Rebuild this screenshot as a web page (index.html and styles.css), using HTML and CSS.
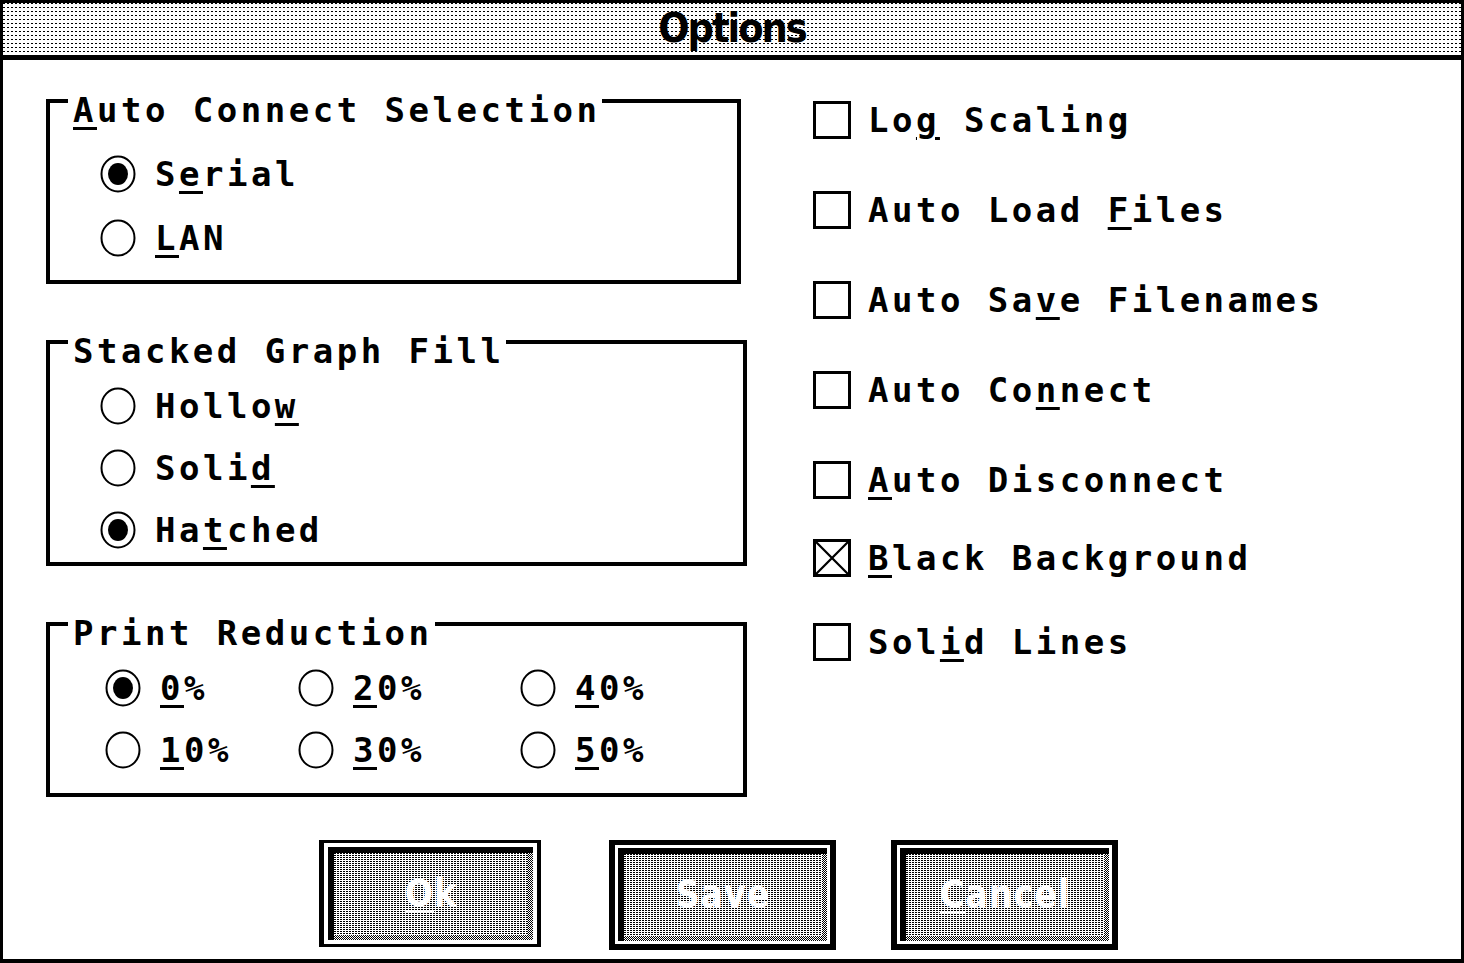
FILE: index.html
```html
<!DOCTYPE html>
<html>
<head>
<meta charset="utf-8">
<title>Options</title>
<link rel="stylesheet" href="styles.css">
</head>
<body>
<div class="window">
  <div class="titlebar"><span class="title">Options</span></div>
  <div class="content">
    <div class="left">
      <div class="group g1">
        <div class="legend"><span class="u">A</span>uto Connect Selection</div>
        <div class="row first">
          <svg class="radio" viewBox="0 0 36 38"><ellipse cx="18" cy="19" rx="16.5" ry="17.5" fill="none" stroke="#000" stroke-width="2"/><ellipse cx="18" cy="19" rx="10" ry="11" fill="#000"/></svg>
          <span class="lbl">S<span class="u">e</span>rial</span>
        </div>
        <div class="row">
          <svg class="radio" viewBox="0 0 36 38"><ellipse cx="18" cy="19" rx="16.5" ry="17.5" fill="none" stroke="#000" stroke-width="2"/></svg>
          <span class="lbl"><span class="u">L</span>AN</span>
        </div>
      </div>

      <div class="group g2">
        <div class="legend">Stacked Graph Fill</div>
        <div class="row first">
          <svg class="radio" viewBox="0 0 36 38"><ellipse cx="18" cy="19" rx="16.5" ry="17.5" fill="none" stroke="#000" stroke-width="2"/></svg>
          <span class="lbl">Hollo<span class="u">w</span></span>
        </div>
        <div class="row">
          <svg class="radio" viewBox="0 0 36 38"><ellipse cx="18" cy="19" rx="16.5" ry="17.5" fill="none" stroke="#000" stroke-width="2"/></svg>
          <span class="lbl">Soli<span class="u">d</span></span>
        </div>
        <div class="row">
          <svg class="radio" viewBox="0 0 36 38"><ellipse cx="18" cy="19" rx="16.5" ry="17.5" fill="none" stroke="#000" stroke-width="2"/><ellipse cx="18" cy="19" rx="10" ry="11" fill="#000"/></svg>
          <span class="lbl">Ha<span class="u">t</span>ched</span>
        </div>
      </div>

      <div class="group g3">
        <div class="legend">Print Reduction</div>
        <div class="pgrid">
          <div class="row">
            <svg class="radio" viewBox="0 0 36 38"><ellipse cx="18" cy="19" rx="16.5" ry="17.5" fill="none" stroke="#000" stroke-width="2"/><ellipse cx="18" cy="19" rx="10" ry="11" fill="#000"/></svg>
            <span class="lbl"><span class="u">0</span>%</span>
          </div>
          <div class="row">
            <svg class="radio" viewBox="0 0 36 38"><ellipse cx="18" cy="19" rx="16.5" ry="17.5" fill="none" stroke="#000" stroke-width="2"/></svg>
            <span class="lbl"><span class="u">2</span>0%</span>
          </div>
          <div class="row">
            <svg class="radio" viewBox="0 0 36 38"><ellipse cx="18" cy="19" rx="16.5" ry="17.5" fill="none" stroke="#000" stroke-width="2"/></svg>
            <span class="lbl"><span class="u">4</span>0%</span>
          </div>
          <div class="row">
            <svg class="radio" viewBox="0 0 36 38"><ellipse cx="18" cy="19" rx="16.5" ry="17.5" fill="none" stroke="#000" stroke-width="2"/></svg>
            <span class="lbl"><span class="u">1</span>0%</span>
          </div>
          <div class="row">
            <svg class="radio" viewBox="0 0 36 38"><ellipse cx="18" cy="19" rx="16.5" ry="17.5" fill="none" stroke="#000" stroke-width="2"/></svg>
            <span class="lbl"><span class="u">3</span>0%</span>
          </div>
          <div class="row">
            <svg class="radio" viewBox="0 0 36 38"><ellipse cx="18" cy="19" rx="16.5" ry="17.5" fill="none" stroke="#000" stroke-width="2"/></svg>
            <span class="lbl"><span class="u">5</span>0%</span>
          </div>
        </div>
      </div>
    </div>

    <div class="right">
      <div class="check c1"><span class="box"></span><span class="lbl">Lo<span class="u">g</span> Scaling</span></div>
      <div class="check c2"><span class="box"></span><span class="lbl">Auto Load <span class="u">F</span>iles</span></div>
      <div class="check c2"><span class="box"></span><span class="lbl">Auto Sa<span class="u">v</span>e Filenames</span></div>
      <div class="check c2"><span class="box"></span><span class="lbl">Auto Co<span class="u">n</span>nect</span></div>
      <div class="check c2"><span class="box"></span><span class="lbl"><span class="u">A</span>uto Disconnect</span></div>
      <div class="check c6"><span class="box checked"><svg viewBox="0 0 31 31"><path d="M0 0 L31 31 M31 0 L0 31" stroke="#000" stroke-width="2.2"/></svg></span><span class="lbl"><span class="u">B</span>lack Background</span></div>
      <div class="check c7"><span class="box"></span><span class="lbl">Sol<span class="u">i</span>d Lines</span></div>
    </div>
  </div>

  <div class="buttons">
    <div class="btn b-ok"><div class="btn-in"><div class="face"><span class="btxt"><span class="bu">O</span>k</span></div></div></div>
    <div class="btn b-save"><div class="btn-in"><div class="face"><span class="btxt">Save</span></div></div></div>
    <div class="btn b-cancel"><div class="btn-in"><div class="face"><span class="btxt"><span class="bu">C</span>ancel</span></div></div></div>
  </div>
</div>
</body>
</html>
```

FILE: styles.css
```css
html, body {
  margin: 0;
  padding: 0;
  background: #fff;
}

.window {
  box-sizing: border-box;
  width: 1464px;
  height: 963px;
  border: 3px solid #000;
  border-bottom-width: 4px;
  background: #fff;
  display: flex;
  flex-direction: column;
  font-family: "DejaVu Sans Mono", "Liberation Mono", monospace;
  font-weight: bold;
  color: #000;
}

.titlebar {
  height: 52px;
  border-bottom: 5px solid #000;
  display: flex;
  align-items: center;
  justify-content: center;
  background-color: #fff;
  background-image:
    linear-gradient(to bottom, transparent 1px, #fff 1px),
    linear-gradient(to right, #000 2px, #fff 2px);
  background-size: 4px 4px, 4px 4px;
}

.title {
  font-family: "DejaVu Sans Condensed", "DejaVu Sans", sans-serif;
  font-weight: bold;
  font-size: 41px;
  letter-spacing: -2px;
  line-height: 44px;
  margin-top: -2px;
}

.content {
  display: grid;
  grid-template-columns: 767px auto;
  padding: 39px 0 0 43px;
}

.left {
  display: flex;
  flex-direction: column;
  gap: 56px;
}

.group {
  box-sizing: border-box;
  border: 4px solid #000;
  padding-left: 50px;
  display: flex;
  flex-direction: column;
  align-items: flex-start;
}

.g1 { width: 695px; height: 185px; }
.g2 { width: 701px; height: 226px; }
.g3 { width: 701px; height: 175px; padding-left: 55px; }

.legend {
  font-size: 34px;
  line-height: 34px;
  letter-spacing: 3.5px;
  background: #fff;
  margin: -10px 0 0 -32px;
  padding: 0 2px 0 5px;
  white-space: pre;
}
.g3 .legend { margin-left: -37px; }

.row {
  display: flex;
  align-items: center;
  height: 38px;
  margin-top: 26px;
}
.g1 .row.first { margin-top: 28px; }
.g2 .row { margin-top: 24px; }
.g2 .row.first { margin-top: 19px; }

.radio {
  width: 36px;
  height: 38px;
  flex: none;
  margin-right: 19px;
}

.lbl {
  font-size: 34px;
  line-height: 34px;
  letter-spacing: 3.5px;
  white-space: pre;
}

.u {
  text-decoration: underline;
  text-decoration-thickness: 3px;
  text-underline-offset: 5px;
}

.pgrid {
  display: grid;
  grid-template-columns: 193px 222px auto;
  row-gap: 24px;
  margin-top: 19px;
}
.pgrid .row { margin-top: 0; }

.right {
  display: flex;
  flex-direction: column;
  padding-top: 2px;
}

.check {
  display: flex;
  align-items: center;
  height: 38px;
}
.c2 { margin-top: 52px; }
.c6 { margin-top: 40px; }
.c7 { margin-top: 46px; }

.box {
  box-sizing: border-box;
  width: 38px;
  height: 38px;
  border: 3px solid #000;
  margin-right: 17px;
  flex: none;
  display: flex;
}
.box.checked { border-width: 3.5px; }
.box svg { width: 100%; height: 100%; display: block; }

.buttons {
  display: flex;
  align-items: flex-start;
  margin-top: 43px;
  padding-left: 316px;
}

.btn {
  box-sizing: border-box;
  border: 4px solid #000;
  padding: 4px;
  background: #fff;
  display: flex;
}
.b-ok { width: 222px; height: 107px; border-width: 3px 4px 3px 5px; }
.b-save { width: 227px; height: 110px; margin-left: 68px; border-width: 5px 6px 6px 6px; padding: 3px; }
.b-cancel { width: 227px; height: 110px; margin-left: 55px; border-width: 5px 6px 6px 6px; padding: 3px; }

.btn-in {
  flex: 1;
  display: flex;
  border-top: 6px solid #000;
  border-left: 6px solid #000;
  padding: 0 5px 5px 0;
  background-color: #fff;
  background-image: conic-gradient(#000 25%, #fff 0 50%, #000 0 75%, #fff 0);
  background-size: 2px 2px;
}

.face {
  flex: 1;
  display: flex;
  align-items: center;
  justify-content: center;
  background-color: #fff;
  background-image:
    linear-gradient(to bottom, transparent 1px, #fff 1px),
    linear-gradient(to right, #000 2px, #fff 2px);
  background-size: 3px 2px, 3px 2px;
}

.btxt {
  font-family: "DejaVu Sans Condensed", "DejaVu Sans", sans-serif;
  font-weight: bold;
  font-size: 37px;
  line-height: 40px;
  color: #fff;
  letter-spacing: 1px;
}

.bu {
  text-decoration: underline;
  text-decoration-thickness: 2px;
  text-underline-offset: 5px;
}
```
